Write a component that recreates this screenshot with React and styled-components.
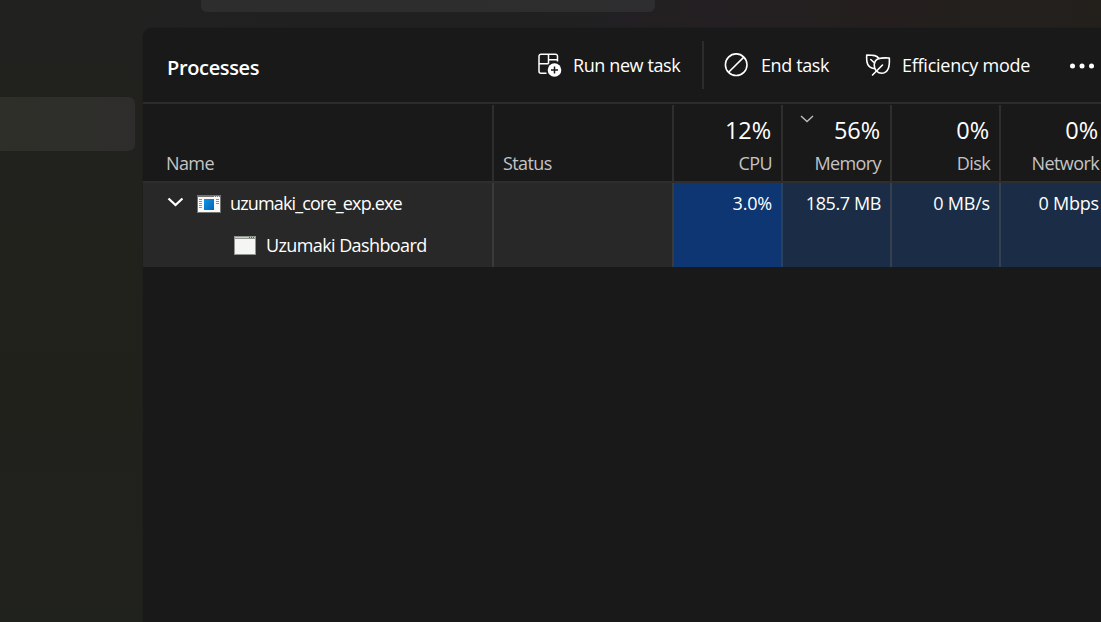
import React from 'react'
import styled, { createGlobalStyle } from 'styled-components'

const GlobalStyle = createGlobalStyle`
  * { box-sizing: border-box; }
  body {
    margin: 0;
    overflow: hidden;
    background: #20201f;
    color: #fff;
    font-family: 'Open Sans', 'Noto Sans', sans-serif;
  }
`

const Window = styled.div`
  width: 1101px;
  height: 622px;
  display: grid;
  grid-template-columns: 143px 1fr;
  grid-template-rows: 28px 1fr;
  overflow: hidden;
  background:
    linear-gradient(to right, #212120 0, #202020 150px, #202021 430px, #241f22 580px, #241f20 660px, #241f1e 760px, #23201c 958px) 143px 0 / 958px 40px no-repeat,
    linear-gradient(to bottom, #212120, #21211d 180px, #21211c 420px, #20221d);
`

const TitleBar = styled.header`
  grid-column: 1 / -1;
  padding-left: 201px;
`

const Search = styled.div`
  width: 454px;
  height: 12px;
  border-radius: 0 0 6px 6px;
  background: linear-gradient(to right, #2d2d2d, #2e2d2f);
`

const Sidebar = styled.nav`
  padding-top: 69px;
`

const NavItem = styled.div`
  width: 135px;
  height: 54px;
  border-radius: 0 7px 7px 0;
  background: linear-gradient(to right, #2e2f29, #2e2e2b 70%, #2e2d2d);
`

const Panel = styled.main`
  width: 967px;
  border-top-left-radius: 9px;
  background: #191919;
  box-shadow: 0 0 0 1px #1e1e1c;
  overflow: hidden;
`

const Toolbar = styled.div`
  height: 76px;
  display: flex;
  align-items: center;
  padding-left: 24px;
  border-bottom: 2px solid #2c2c2c;
`

const Title = styled.h1`
  width: 370px;
  margin: 4px 0 0;
  font-size: 20px;
  font-weight: 600;
  letter-spacing: -0.35px;
`

const Action = styled.div`
  width: ${props => props.$width}px;
  display: flex;
  align-items: center;
  gap: ${props => props.$gap}px;
  font-size: 18px;
  white-space: nowrap;
  letter-spacing: ${props => props.$spacing || 0}px;

  svg { flex: none; }
`

const Divider = styled.div`
  width: 2px;
  height: 48px;
  margin-right: 20px;
  background: #2c2c2c;
`

const More = styled.div`
  display: flex;
  padding: 2px 0 0 1px;
`

const Columns = styled.div`
  display: grid;
  grid-template-columns: 351px 180px repeat(4, 109px);
`

const HeadCell = styled.div`
  height: 78px;
  display: flex;
  flex-direction: column;
  justify-content: flex-end;
  align-items: ${props => props.$right ? 'flex-end' : 'flex-start'};
  padding: 0 ${props => props.$right ? 9 : 0}px 6px ${props => props.$indent || 0}px;
  margin-top: 1px;
  border-right: 2px solid #2e2e2e;
  border-bottom: 2px solid #2e2e2e;
`

const Usage = styled.div`
  width: 100%;
  display: flex;
  justify-content: flex-end;
  padding-right: 1px;
  font-size: 23.5px;
  line-height: 33px;
  letter-spacing: -0.1px;

  svg { margin: 1px auto 0 17px; }
`

const Label = styled.div`
  color: #c4c4c4;
  font-size: 18px;
  line-height: 24px;
  margin-top: 4px;
  letter-spacing: -0.6px;
`

const Cell = styled.div`
  height: 84px;
  padding: 8px 9px 0 0;
  border-right: 2px solid ${props => props.$line};
  background: ${props => props.$bg};
  font-size: 18px;
  line-height: 24px;
  text-align: right;
  white-space: nowrap;
  letter-spacing: ${props => props.$spacing || -0.2}px;
`

const NameCell = styled(Cell)`
  padding: 0;
  text-align: left;
`

const Process = styled.div`
  height: 42px;
  display: flex;
  align-items: center;
  padding-left: ${props => props.$indent}px;
  letter-spacing: ${props => props.$spacing}px;

  svg { flex: none; }
  svg + svg { margin-left: 14px; }
`

const ProcessName = styled.span`
  margin: -2px 0 0 ${props => props.$gap}px;
`

const TaskIcon = () => (
  <svg width='26' height='26' viewBox='0 0 26 26' fill='none' stroke='#fff' strokeWidth='1.5'>
    <path d='M9.5 21.2H4A2 2 0 0 1 2 19.2V4.2A2 2 0 0 1 4 2.2H18.500A2 2 0 0 1 20.500 4.200V9.500M11.500 2.200V11.700M2 11.700H11.500M11.500 7.700H20.500' />
    <circle cx='17.500' cy='18' r='6.800' fill='#fff' stroke='none' />
    <path d='M17.500 14.500V21.500M14 18H21' stroke='#191919' />
  </svg>
)

const EndIcon = () => (
  <svg width='24' height='24' viewBox='0 0 24 24' fill='none' stroke='#fff' strokeWidth='1.6'>
    <circle cx='12.200' cy='11.700' r='10.800' />
    <path d='M4.600 19.300L19.800 4.100' />
  </svg>
)

const LeafIcon = () => (
  <svg width='26' height='24' viewBox='0 0 26 24' fill='none' stroke='#fff' strokeWidth='1.600' strokeLinecap='round' strokeLinejoin='round'>
    <path d='M14 5.500C12 2.500 9 2 1.700 2C1.300 10 2.500 14.500 9 15.500' />
    <path d='M24.300 5C17 4.500 9.500 4.500 9.200 12C9.200 17 12.500 20.300 17 20.300C23.500 20 24.800 13 24.300 5Z' />
    <path d='M7.500 22L17.500 12M5.800 6.500L9.500 10' />
  </svg>
)

const MoreIcon = () => (
  <svg width='26' height='6' viewBox='0 0 26 6' fill='#fff'>
    <circle cx='2.500' cy='3' r='2.500' />
    <circle cx='12' cy='3' r='2.500' />
    <circle cx='21.500' cy='3' r='2.500' />
  </svg>
)

const SortIcon = () => (
  <svg width='14' height='8' viewBox='0 0 14 8' fill='none' stroke='#bdbdbd' strokeWidth='1.400'>
    <path d='M1 1L7 6.500L13 1' />
  </svg>
)

const ExpandIcon = () => (
  <svg width='16' height='14' viewBox='0 0 16 14' fill='none' stroke='#fff' strokeWidth='2.300'>
    <path d='M1.500 1.500L8.500 8L15.500 1.500' />
  </svg>
)

const ExeIcon = () => (
  <svg width='24' height='18' viewBox='0 0 24 18'>
    <defs>
      <linearGradient id='blue' x2='1' y2='1'>
        <stop stopColor='#1493e0' />
        <stop offset='1' stopColor='#0066bd' />
      </linearGradient>
    </defs>
    <path fill='#72746f' d='M0 0H24V18H0Z' />
    <path fill='#fafafa' d='M1 2H23V17H1Z' />
    <path stroke='#ddd' strokeDasharray='1 1' d='M17 1.500H23' />
    <path stroke='#909090' d='M2 4.500H5M2 6.500H5M2 8.500H5M2 10.500H5M2 12.500H5M19 4.500H22M19 6.500H22M19 8.500H22' />
    <path fill='url(#blue)' d='M7 4H17V15H7Z' />
  </svg>
)

const WindowIcon = () => (
  <svg width='22' height='20' viewBox='0 0 22 20'>
    <path fill='#91958f' d='M0 0H22V19H0Z' />
    <path fill='#c9cdd0' d='M1 1H21V2H1Z' />
    <path fill='#f5f5f4' d='M1 3H21V18H1Z' />
    <path stroke='#555' strokeDasharray='1 1' d='M15 1.500H21' />
  </svg>
)

const resources = [
  { name: 'CPU', usage: '12%', value: '3.0%', bg: '#0d3673', line: '#29405f' },
  { name: 'Memory', usage: '56%', value: '185.7 MB', bg: '#1b2d46', line: '#36404e', sorted: true, spacing: -0.4 },
  { name: 'Disk', usage: '0%', value: '0 MB/s', bg: '#1b2d46', line: '#36404e' },
  { name: 'Network', usage: '0%', value: '0 Mbps', bg: '#1b2d46', line: '#36404e' }
]

const App = () => (
  <Window>
    <GlobalStyle />
    <TitleBar><Search /></TitleBar>
    <Sidebar><NavItem /></Sidebar>
    <Panel>
      <Toolbar>
        <Title>Processes</Title>
        <Action $width={165} $gap={10} $spacing={-0.4}><TaskIcon />Run new task</Action>
        <Divider />
        <Action $width={141} $gap={13} $spacing={-0.4}><EndIcon />End task</Action>
        <Action $width={204} $gap={11} $spacing={-0.25}><LeafIcon />Efficiency mode</Action>
        <More><MoreIcon /></More>
      </Toolbar>
      <Columns>
        <HeadCell $indent={23}><Label>Name</Label></HeadCell>
        <HeadCell $indent={9}><Label>Status</Label></HeadCell>
        {resources.map(({ name, usage, sorted }) => (
          <HeadCell key={name} $right>
            <Usage>{sorted && <SortIcon />}{usage}</Usage>
            <Label>{name}</Label>
          </HeadCell>
        ))}
        <NameCell $bg='#282828' $line='#3a3a3a'>
          <Process $indent={24} $spacing={-0.85}>
            <ExpandIcon />
            <ExeIcon />
            <ProcessName $gap={9}>uzumaki_core_exp.exe</ProcessName>
          </Process>
          <Process $indent={91} $spacing={-0.6}>
            <WindowIcon />
            <ProcessName $gap={10}>Uzumaki Dashboard</ProcessName>
          </Process>
        </NameCell>
        <Cell $bg='#282828' $line='#3a3a3a' />
        {resources.map(({ name, value, bg, line, spacing }) => (
          <Cell key={name} $bg={bg} $line={line} $spacing={spacing}>{value}</Cell>
        ))}
      </Columns>
    </Panel>
  </Window>
)

export default App
